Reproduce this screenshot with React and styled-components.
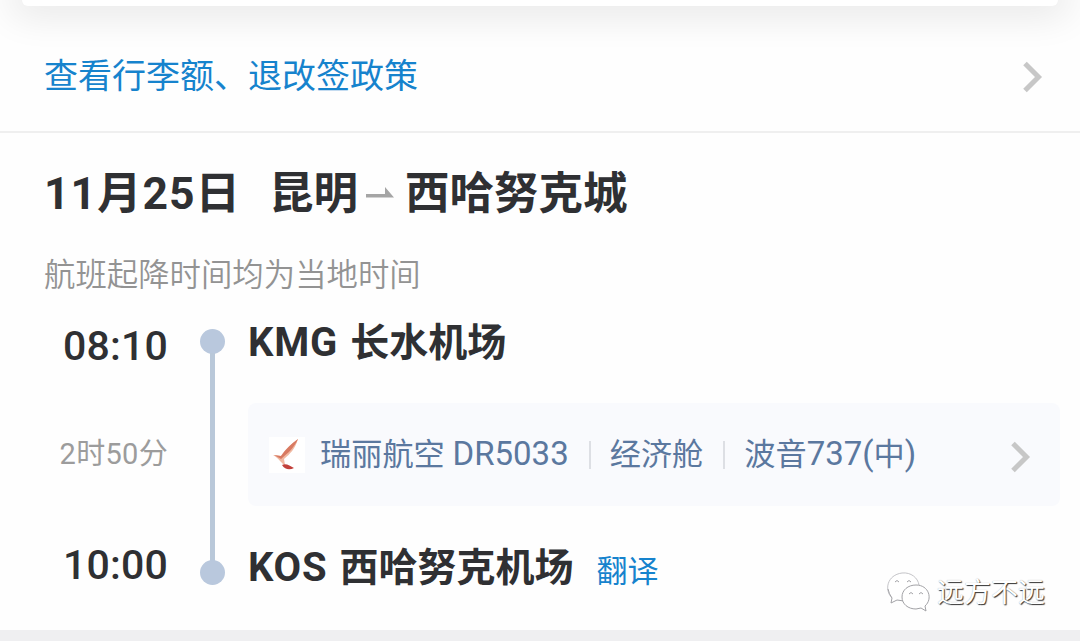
import React from 'react'
import styled, { createGlobalStyle } from 'styled-components'


const GlobalStyle = createGlobalStyle`
  * {
    box-sizing: border-box;
  }

  body {
    margin: 0;
    background-color: #fefefe;
    font-family: Roboto, "Noto Sans CJK SC", sans-serif;
    color: #2f3033;
  }
`

const Page = styled.div`
  position: relative;
  display: flex;
  flex-direction: column;
  height: 641px;
  overflow: hidden;
`

const CardEdge = styled.div`
  flex: none;
  height: 6px;
  margin: 0 22px;
  border-radius: 0 0 8px 8px;
  background-color: #fff;
  box-shadow: 0 -4px 38px 12px rgba(0, 0, 0, 0.11);
`

const PolicyRow = styled.a`
  display: flex;
  align-items: center;
  justify-content: space-between;
  height: 127px;
  padding: 15px 36px 0 44px;
  border-bottom: 2px solid #efefef;
  font-size: 34px;
  line-height: 50px;
  color: #1683cd;
`

const Section = styled.section`
  display: flex;
  flex-direction: column;
  height: 497px;
`

const Title = styled.h1`
  display: flex;
  align-items: center;
  height: 64px;
  margin: 29px 0 0 44px;
  font-size: 44.5px;
  font-weight: 700;
  line-height: 64px;
  white-space: nowrap;
`

const TitleDate = styled.span`
  width: 225px;
  letter-spacing: 1px;
`

const ArrowIcon = styled.svg`
  flex: none;
  width: 28px;
  height: 11px;
  margin: 0 11px 3px 8px;
`

const Note = styled.p`
  margin: 27px 0 0 44px;
  font-size: 31.4px;
  font-weight: 350;
  line-height: 46px;
  color: #939393;
`

const Trip = styled.div`
  display: grid;
  grid-template-columns: 168px 88px 804px;
  height: 290px;
  margin-top: 14px;
`

const Times = styled.div`
  display: flex;
  flex-direction: column;
  align-items: flex-end;
  justify-content: space-between;
  padding: 9px 0 14px;
`

const Time = styled.span`
  font-size: 41px;
  font-weight: 500;
  line-height: 48px;
  letter-spacing: 0.2px;
`

const Duration = styled.span`
  margin-bottom: 3px;
  font-size: 29px;
  font-weight: 400;
  line-height: 44px;
  letter-spacing: 0.3px;
  color: #9c9c9c;
`

const Rail = styled.div`
  display: flex;
  flex-direction: column;
  align-items: center;
  padding-top: 16px;
`

const Dot = styled.i`
  width: 25px;
  height: 25px;
  border-radius: 50%;
  background-color: #b9c8dd;
`

const Line = styled.i`
  width: 5px;
  height: 208px;
  margin: -1px 0;
  background-color: #b9c8d9;
`

const Stops = styled.div`
  display: flex;
  flex-direction: column;
  margin-left: -8px;
`

const Airport = styled.div`
  display: flex;
  align-items: center;
  height: 58px;
  font-size: 39px;
  font-weight: 700;
  white-space: nowrap;
`

const Code = styled.span`
  margin-right: 12px;
  font-size: 40px;
  letter-spacing: 0.8px;
`

const AirportName = styled.span`
  margin-bottom: 6px;
`

const Translate = styled.a`
  margin: 3px 0 0 23px;
  font-size: 31px;
  font-weight: 400;
  color: #1683cd;
`

const Flight = styled.div`
  display: flex;
  align-items: center;
  height: 103px;
  margin: 32px 0;
  padding: 0 28px 0 21px;
  border-radius: 8px;
  background-color: #f9fafd;
  font-size: 31.2px;
  color: #5b789f;
  white-space: nowrap;
`

const FlightText = styled.span`
  margin-bottom: 7px;
`

const Latin = styled.span`
  font-size: 33px;
`

const AirlineLogo = styled.svg`
  flex: none;
  width: 36px;
  height: 36px;
  margin-right: 15px;
  background-color: #fff;
`

const Divider = styled.i`
  width: 2px;
  height: 28px;
  margin: 0 19px 0 20px;
  background-color: #dddfe4;
`

const ChevronIcon = styled.svg`
  flex: none;
  width: 22px;
  height: 34px;
  margin-left: auto;

  ${Flight} & {
    margin-top: 3px;
  }
`

const Footer = styled.div`
  flex: none;
  height: 11px;
  background-color: #efeff1;
`

const Watermark = styled.div`
  position: absolute;
  top: 569px;
  left: 885px;
  display: flex;
  align-items: center;
  height: 44px;
  font-size: 27px;
  line-height: 36px;
  color: #fff;
  text-shadow: 1px 1px 1px #333, 0 0 1px #aaa;
`

const WechatIcon = styled.svg`
  width: 48px;
  height: 44px;
  margin-right: 4px;
`

const WatermarkName = styled.span`
  margin-top: 4px;
`

const Chevron = () => (
  <ChevronIcon viewBox="0 0 22 34">
    <path d="M3 4.500 L16.500 18 L3 31.500" fill="none" stroke="#c7c7c7" strokeWidth="5" />
  </ChevronIcon>
)

const App = () => {
  return (
    <>
      <GlobalStyle />
      <Page>
        <CardEdge />
        <PolicyRow>
          查看行李额、退改签政策
          <Chevron />
        </PolicyRow>
        <Section>
          <Title>
            <TitleDate>11月25日</TitleDate>
            <span>昆明</span>
            <ArrowIcon viewBox="0 0 28 11">
              <path d="M0 7h19V0l9 10.500H0z" fill="#a5a5a5" />
            </ArrowIcon>
            <span>西哈努克城</span>
          </Title>
          <Note>航班起降时间均为当地时间</Note>
          <Trip>
            <Times>
              <Time>08:10</Time>
              <Duration>2时50分</Duration>
              <Time>10:00</Time>
            </Times>
            <Rail>
              <Dot />
              <Line />
              <Dot />
            </Rail>
            <Stops>
              <Airport>
                <Code>KMG</Code>
                <AirportName>长水机场</AirportName>
              </Airport>
              <Flight>
                <AirlineLogo viewBox="0 0 36 36">
                  <path d="M29 2C24 6 17 11 12 19L4 18c4 2 6 5 10 9l2 1-1-6c6-5 11-10 14-20z" fill="#f0b9a2" />
                  <path d="M29 2C22 7 17 12 12 19l-7-1 7 4C19 16 25 11 29 2z" fill="#d87a62" />
                  <path d="M13 28c4-2 8 1 12 3-4 2-9 2-12-3z" fill="#c2403a" />
                </AirlineLogo>
                <FlightText>瑞丽航空 <Latin>DR5033</Latin></FlightText>
                <Divider />
                <FlightText>经济舱</FlightText>
                <Divider />
                <FlightText>波音<Latin>737(</Latin>中<Latin>)</Latin></FlightText>
                <Chevron />
              </Flight>
              <Airport>
                <Code>KOS</Code>
                <AirportName>西哈努克机场</AirportName>
                <Translate>翻译</Translate>
              </Airport>
            </Stops>
          </Trip>
        </Section>
        <Footer />
        <Watermark>
          <WechatIcon viewBox="0 0 48 44" fill="#fff" stroke="#a2a2a6" strokeWidth="1">
            <path d="M7 29C-1 21 2 6 17 4c9-1 16 5 17 12" stroke="#c4c4c8" />
            <path d="M3 20q1 5 4 9l-1 5 6-3 7 1" />
            <path d="M31 16c-8 0-14 5-14 12s6 12 14 12l5-1 5 3-1-5c8-7 4-21-9-21z" />
            <path d="M10 13q2-3 4 0M22 13q2-3 4 0M24 25q2-3 4 0M34 25q2-3 4 0" />
          </WechatIcon>
          <WatermarkName>远方不远</WatermarkName>
        </Watermark>
      </Page>
    </>
  )
}

export default App
